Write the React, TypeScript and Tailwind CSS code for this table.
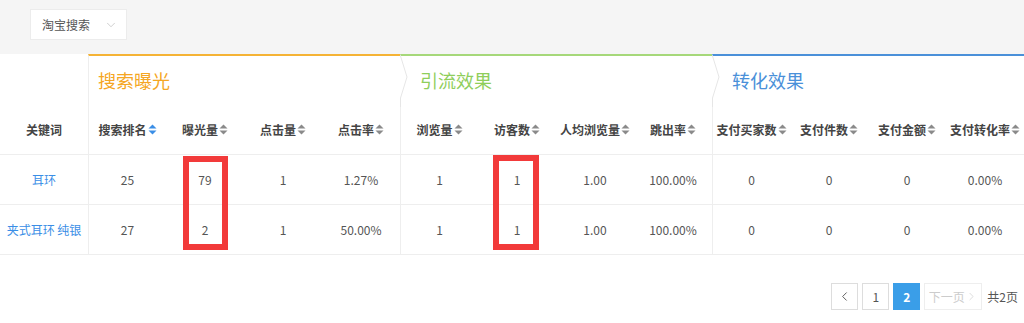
import { ChevronDown, ChevronLeft, ChevronRight } from "lucide-react";

type Row = { kw: string; vals: string[] };

const groups = [
  { title: "搜索曝光", color: "text-[#f5a623]", border: "border-t-[#f5b335]", pad: "pl-[9px]", cols: ["搜索排名", "曝光量", "点击量", "点击率"] },
  { title: "引流效果", color: "text-[#8fce5b]", border: "border-t-[#a6d87a]", pad: "pl-[19px]", cols: ["浏览量", "访客数", "人均浏览量", "跳出率"] },
  { title: "转化效果", color: "text-[#4a90d9]", border: "border-t-[#4a90d9]", pad: "pl-[19px]", cols: ["支付买家数", "支付件数", "支付金额", "支付转化率"] },
];

const rows: Row[] = [
  { kw: "耳环", vals: ["25", "79", "1", "1.27%", "1", "1", "1.00", "100.00%", "0", "0", "0", "0.00%"] },
  { kw: "夹式耳环 纯银", vals: ["27", "2", "1", "50.00%", "1", "1", "1.00", "100.00%", "0", "0", "0", "0.00%"] },
];

function SortIcon({ active }: { active?: boolean }) {
  const c = active ? "#3a8ee6" : "#8a8a8a";
  return (
    <svg width="9" height="11" viewBox="0 0 9 11" className="ml-[1px]">
      <path d="M4.5 0.5 L8.5 4.5 L0.5 4.5 Z" fill={c} />
      <path d="M4.5 10.5 L8.5 6.5 L0.5 6.5 Z" fill={c} />
    </svg>
  );
}

export default function App() {
  return (
    <div
      className="w-[1024px] h-[323px] bg-white text-[12px] text-[#555] overflow-hidden"
      style={{ fontFamily: '"Noto Sans CJK SC", "Noto Sans", sans-serif' }}
    >
      {/* 顶部筛选 */}
      <div className="h-[54px] bg-[#f5f5f5] pt-[9px] pl-[30px]">
        <div className="w-[97px] h-[31px] bg-white border border-[#ececec] flex items-center pl-[11px] gap-[14px]">
          <span className="text-[#555]">淘宝搜索</span>
          <ChevronDown size={14} strokeWidth={1.2} className="text-[#bbb]" />
        </div>
      </div>

      {/* 表格 */}
      <div className="relative">
        <div className="grid grid-cols-[88px_repeat(12,78px)]">
          {/* 分组标题 */}
          <div className="h-[51px]" />
          {groups.map((g, gi) => (
            <div
              key={g.title}
              className={`relative col-span-4 h-[51px] border-t-2 ${g.border} border-l border-l-[#eee] flex items-center ${g.pad}`}
            >
              {gi > 0 && (
                <svg className="absolute left-[-1px] top-0" width="10" height="51" viewBox="0 0 10 51">
                  <rect x="0" y="0" width="2" height="51" fill="#fff" />
                  <path d="M0.5 0 L7 21 L0.5 42 L0.5 51" stroke="#e6e6e6" strokeWidth="1" fill="none" />
                </svg>
              )}
              <span className={`text-[18px] ${g.color}`}>{g.title}</span>
            </div>
          ))}

          {/* 列标题 */}
          <div className="h-[50px] border-b border-[#eee] flex items-center justify-center font-bold text-[#444]">关键词</div>
          {groups.map((g) =>
            g.cols.map((c, ci) => (
              <div
                key={c}
                className={`h-[50px] border-b border-[#eee] flex items-center justify-center font-bold text-[#444] ${ci === 0 ? "border-l border-l-[#eee]" : ""}`}
              >
                {c}
                <SortIcon active={c === "搜索排名"} />
              </div>
            ))
          )}

          {/* 数据行 */}
          {rows.map((r) => (
            <>
              <div key={r.kw} className="h-[50px] border-b border-[#eee] flex items-center justify-center text-[#3a8ee6]">
                {r.kw}
              </div>
              {r.vals.map((v, i) => (
                <div
                  key={r.kw + i}
                  className={`h-[50px] border-b border-[#eee] flex items-center justify-center ${i % 4 === 0 ? "border-l border-l-[#eee]" : ""}`}
                >
                  {v}
                </div>
              ))}
            </>
          ))}
        </div>

        {/* 标注框 */}
        <div className="absolute left-[183px] top-[102px] w-[45px] h-[94px] border-[6px] border-[#f23a3a]" />
        <div className="absolute left-[493px] top-[101px] w-[46px] h-[95px] border-[6px] border-[#f23a3a]" />
      </div>

      {/* 分页 */}
      <div className="flex justify-end items-center gap-[4px] mt-[28px] pr-[6px]">
        <button className="w-[27px] h-[27px] border border-[#ddd] flex items-center justify-center text-[#555]">
          <ChevronLeft size={15} strokeWidth={1.5} />
        </button>
        <button className="w-[27px] h-[27px] border border-[#ddd] flex items-center justify-center text-[#555]">1</button>
        <button className="w-[27px] h-[27px] bg-[#3a9ee8] flex items-center justify-center text-white font-bold">2</button>
        <button className="w-[58px] h-[27px] border border-[#eee] flex items-center justify-center text-[#ccc]">
          下一页
          <ChevronRight size={13} strokeWidth={1.2} />
        </button>
        <span className="ml-[1px] text-[#555]">共2页</span>
      </div>
    </div>
  );
}
